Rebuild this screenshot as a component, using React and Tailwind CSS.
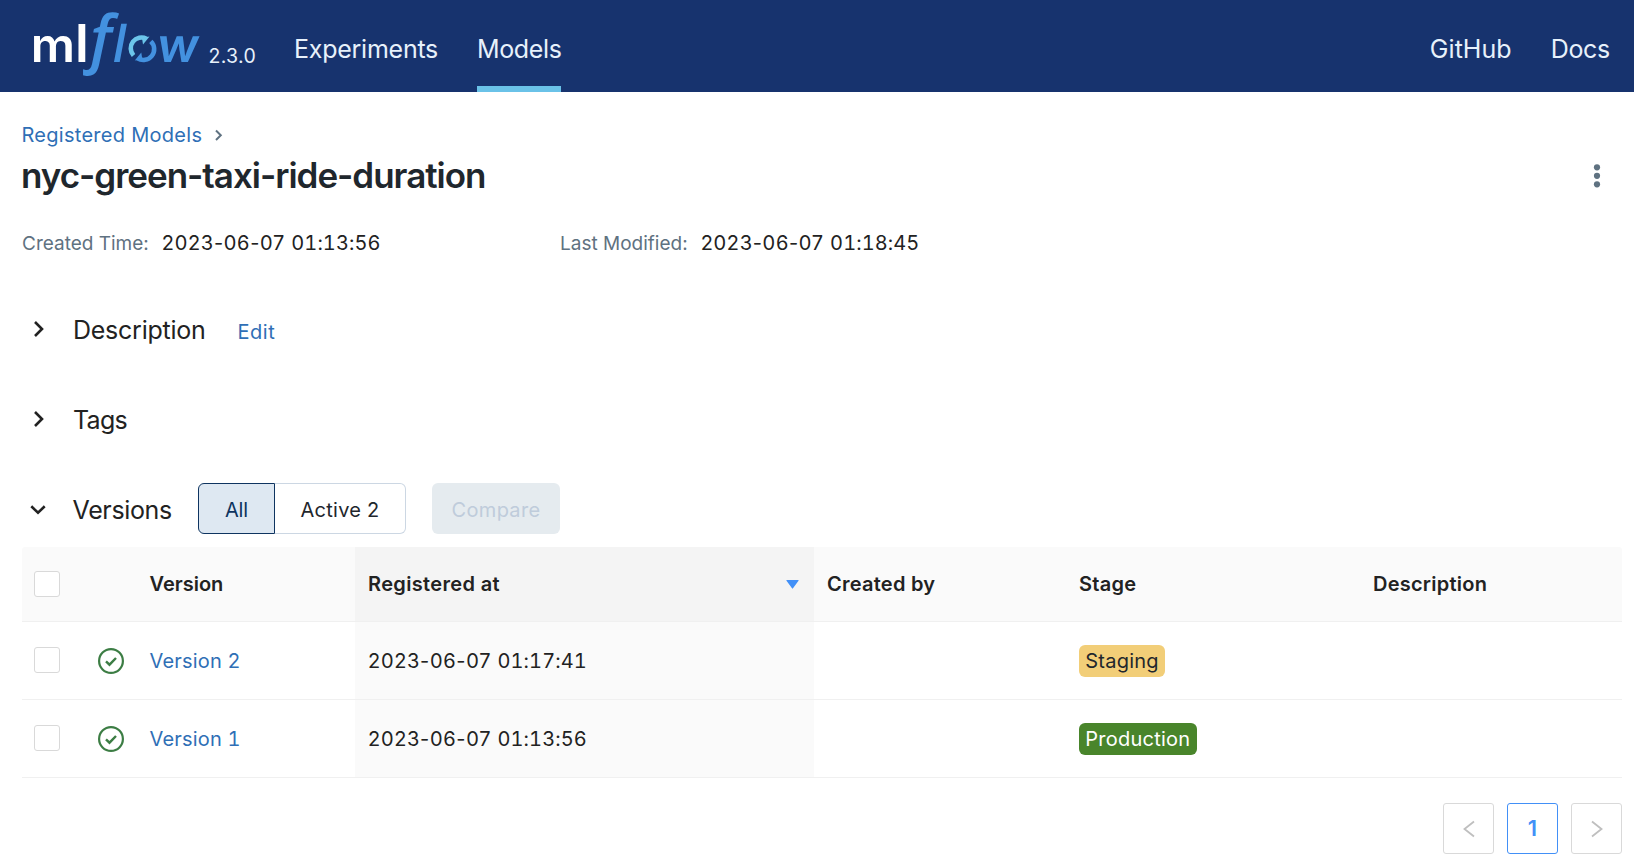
const versions = [
  { name: "Version 2", date: "2023-06-07", time: "01:17:41", stage: "Staging", tag: "bg-[#f2ce78] text-[#1f272d]" },
  { name: "Version 1", date: "2023-06-07", time: "01:13:56", stage: "Production", tag: "bg-[#49852b] text-white" },
];

const grid = "grid grid-cols-[333px_459px_252px_294px_262px]";

function Logo() {
  return (
    <svg width="176" height="92" viewBox="28 0 176 92" className="shrink-0 overflow-visible" aria-label="mlflow">
      <g fontFamily="Inter, sans-serif" fontWeight="600" fill="#fff">
        <text transform="translate(30.7 62) scale(1.046 1)" fontSize="47">m</text>
        <text transform="translate(74.9 62) scale(1.12 1.12)" fontSize="47">l</text>
      </g>
      <g fill="#4391df">
        <text x="90" y="61" fontFamily="'Open Sans', sans-serif" fontStyle="italic" fontWeight="600" fontSize="63">f</text>
        <text transform="matrix(0.95 0 -0.21 1.12 111 62)" fontFamily="Inter, sans-serif" fontWeight="600" fontSize="47">l</text>
        <text transform="matrix(1.06 0 -0.14 1 155.2 62)" fontFamily="Inter, sans-serif" fontWeight="600" fontSize="47">w</text>
      </g>
      <path d="M133.5 55.500A10.800 10.800 0 0 1 146.500 38.700" fill="none" stroke="#6cc5ea" strokeWidth="4.600" />
      <path d="M149.500 36.500L143 44.500L142 38Z" fill="#6cc5ea" />
      <path d="M150.800 41.300A10.800 10.800 0 0 1 137.500 58.200" fill="none" stroke="#4391df" strokeWidth="4.600" />
      <path d="M134.800 60.500L141.300 52.500L142.300 59Z" fill="#4391df" />
    </svg>
  );
}

function Chevron({ down }) {
  return (
    <svg className="mb-[2px]" width="20" height="20" viewBox="0 0 20 20" fill="none" stroke="#222" strokeWidth="2.6">
      <path d={down ? "M3.300 8.300L10 14.800L16.700 8.300" : "M6 3L13 10L6 17"} />
    </svg>
  );
}

function Timestamp({ date, time }) {
  return (
    <span>
      <span className="tracking-[0.680px]">{date} </span>
      <span className="tracking-[0.100px] tabular-nums">{time}</span>
    </span>
  );
}

function Checkbox() {
  return <span className="block size-[26px] shrink-0 rounded-[3px] border border-[#d9d9d9] bg-white" />;
}

function CheckCircle() {
  return (
    <svg width="26" height="26" viewBox="0 0 26 26" fill="none" stroke="#3c7d44">
      <circle cx="13" cy="13" r="11.900" strokeWidth="2.200" />
      <path d="M8 13.300L11.500 16.700L18 10" strokeWidth="2.400" />
    </svg>
  );
}

function PageButton({ active, children }) {
  return (
    <span
      className={
        active
          ? "flex size-[51px] items-center justify-center rounded-[3px] border border-[#4290f7] pb-[2px] text-[22px] font-semibold text-[#4290f7]"
          : "flex size-[51px] items-center justify-center rounded-[3px] border border-[#d9d9d9] text-[#bfbfbf]"
      }
    >
      {children}
    </span>
  );
}

export default function App() {
  return (
    <div className="h-[868px] w-[1634px] overflow-hidden bg-white font-['Inter',sans-serif] text-[20px] leading-[32px] text-[#222]">
      <header className="flex h-[92px] bg-[#17336e] text-[25px] text-[#e7f1fb]">
        <div className="flex w-[257px] pl-[28px]">
          <Logo />
          <span className="mt-[40px] ml-[4.500px] text-[19.5px] tracking-[0.3px]">2.3.0</span>
        </div>
        <nav className="ml-[37px] flex gap-[39px]">
          <span className="flex w-[144px] items-center pt-[6px] tracking-[-0.25px]">Experiments</span>
          <span className="flex w-[84px] items-center border-b-[6px] border-[#6ac2e8] pt-[12px] tracking-[-0.35px]">Models</span>
        </nav>
        <nav className="ml-auto flex items-center gap-[39px] pt-[6px] pr-[24px]">
          <span className="tracking-[0.05px]">GitHub</span>
          <span className="tracking-[-0.3px]">Docs</span>
        </nav>
      </header>

      <main className="pt-[27px] pr-[12px] pl-[22px]">
        <div className="flex items-center">
          <span className="-ml-[0.500px] tracking-[0.280px] text-[#2f6fb6]">Registered Models</span>
          <svg className="ml-[11px]" width="12" height="14" viewBox="0 0 12 14" fill="none" stroke="#5f7281" strokeWidth="2">
            <path d="M3 2.500L7.800 7.300L3 12" />
          </svg>
        </div>
        <div className="mt-1 flex h-10 items-center justify-between">
          <h1 className="-ml-px text-[35px] font-semibold tracking-[-1.020px] text-[#1f272d]">nyc-green-taxi-ride-duration</h1>
          <svg className="mr-[16px]" width="18" height="26" viewBox="0 0 18 26" fill="#5f7281">
            <circle cx="9" cy="5.300" r="3.100" />
            <circle cx="9" cy="13.800" r="3.100" />
            <circle cx="9" cy="22.300" r="3.100" />
          </svg>
        </div>

        <div className="mt-[32px] flex h-8">
          <div className="flex w-[538px] items-baseline gap-[13px]">
            <span className="text-[19px] text-[#5f7281]">Created Time:</span>
            <Timestamp date="2023-06-07" time="01:13:56" />
          </div>
          <div className="flex items-baseline gap-[13px]">
            <span className="text-[19px] text-[#5f7281]">Last Modified:</span>
            <Timestamp date="2023-06-07" time="01:18:45" />
          </div>
        </div>

        <div className="mt-[51px] flex h-10 items-center pl-[7px]">
          <Chevron />
          <span className="ml-[24px] text-[25px] tracking-[-0.250px]">Description</span>
          <span className="mt-[3px] ml-[32px] tracking-[0.500px] text-[#2f6fb6]">Edit</span>
        </div>
        <div className="mt-[50px] flex h-10 items-center pl-[7px]">
          <Chevron />
          <span className="ml-[24px] text-[25px] tracking-[-0.700px]">Tags</span>
        </div>
        <div className="mt-[43px] flex h-[51px] items-center pl-[6px]">
          <Chevron down />
          <span className="mt-[3px] ml-[24.500px] w-[125.500px] text-[25px] tracking-[-0.350px]">Versions</span>
          <span className="flex h-[51px] w-[77px] items-center justify-center rounded-l-[6px] border border-[#0e3460] bg-[#dee8f2] pt-[2px] tracking-[-0.100px] text-[#0e3460]">All</span>
          <span className="flex h-[51px] w-[131px] items-center justify-center rounded-r-[6px] border border-l-0 border-[#ccd7e3] pt-[2px] tracking-[0.240px] text-[#1f272d]">Active 2</span>
          <span className="ml-[26px] flex h-[51px] w-[128px] items-center justify-center rounded-[6px] bg-[#e5ebef] pt-[2px] tracking-[0.300px] text-[#bfccdb]">Compare</span>
        </div>

        <div className="mt-[13px]">
          <div className={`${grid} h-[75px] overflow-hidden rounded-t-[3px] border-b border-[#f0f0f0] bg-[#fafafa] font-semibold`}>
            <div className="flex items-center pl-[12px]">
              <Checkbox />
              <span className="ml-[89.500px]">Version</span>
            </div>
            <div className="flex items-center justify-between bg-[#f4f4f4] pr-[15px] pl-[13px]">
              <span className="tracking-[0.340px]">Registered at</span>
              <svg width="13" height="9" viewBox="0 0 13 9" fill="#4290f7">
                <path d="M0.800 0H12.200Q13 0 12.500 0.800L7 8.300Q6.500 9 6 8.300L0.500 0.800Q0 0 0.800 0Z" />
              </svg>
            </div>
            <div className="flex items-center pl-[13px] tracking-[0.250px]">Created by</div>
            <div className="flex items-center pl-[13px] tracking-[0.300px]">Stage</div>
            <div className="flex items-center pl-[13px] tracking-[0.240px]">Description</div>
          </div>
          {versions.map((v) => (
            <div key={v.name} className={`${grid} h-[78px] border-b border-[#f0f0f0]`}>
              <div className="flex items-center pl-[12px]">
                <span className="mb-[2px]"><Checkbox /></span>
                <span className="mt-px ml-[38px]"><CheckCircle /></span>
                <span className="ml-[25.500px] tracking-[0.180px] tabular-nums text-[#2f6fb6]">{v.name}</span>
              </div>
              <div className="flex items-center bg-[#fafafa] pl-[13px]">
                <Timestamp date={v.date} time={v.time} />
              </div>
              <div />
              <div className="flex items-center pl-[13px]">
                <span className={`rounded-[6px] px-[6.300px] tracking-[0.230px] ${v.tag}`}>{v.stage}</span>
              </div>
              <div />
            </div>
          ))}
        </div>

        <div className="mt-[25px] flex justify-end gap-[13px]">
          <PageButton>
            <svg width="12" height="18" viewBox="0 0 12 18" fill="none" stroke="currentColor" strokeWidth="1.800">
              <path d="M11 1.500L1.500 9L11 16.500" />
            </svg>
          </PageButton>
          <PageButton active>1</PageButton>
          <PageButton>
            <svg width="12" height="18" viewBox="0 0 12 18" fill="none" stroke="currentColor" strokeWidth="1.800">
              <path d="M1 1.500L10.500 9L1 16.500" />
            </svg>
          </PageButton>
        </div>
      </main>
    </div>
  );
}
